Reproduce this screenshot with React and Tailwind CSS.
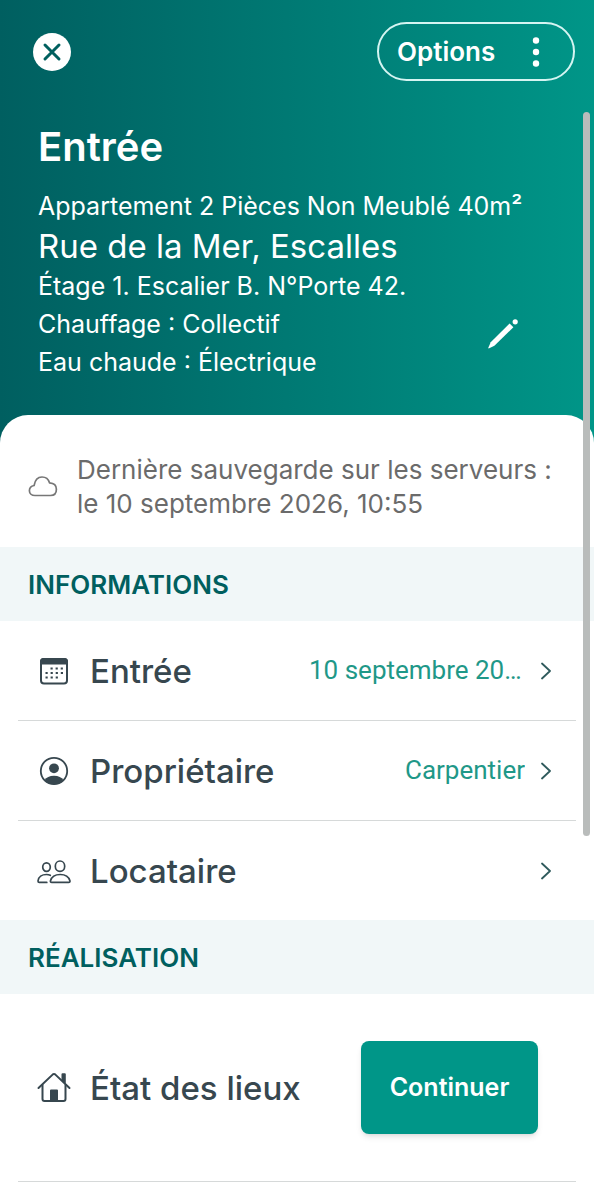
import React from 'react';

const CloseIcon = () => (
  <svg viewBox="0 0 38 38" className="size-[38px]" aria-hidden="true">
    <circle cx="19" cy="19" r="19" fill="#fff" />
    <path d="M12 12l14 14M26 12L12 26" stroke="#00605f" strokeWidth="3" strokeLinecap="round" />
  </svg>
);

const DotsIcon = () => (
  <svg viewBox="0 0 8 30" className="h-[30px] w-2" fill="currentColor" aria-hidden="true">
    <circle cx="4" cy="3.5" r="3.2" />
    <circle cx="4" cy="15" r="3.2" />
    <circle cx="4" cy="26.5" r="3.2" />
  </svg>
);

const PencilIcon = () => (
  <svg viewBox="0 0 30 30" className="size-[30px]" fill="currentColor" aria-hidden="true">
    <path d="M21.600 4.400L25.400 8.200L6.400 26.800L1.200 29.300Q0 29.700.4 28.500L2.700 23.300z" />
    <circle cx="27.200" cy="2.800" r="2.600" />
  </svg>
);

const CloudIcon = () => (
  <svg viewBox="0 0 30 24" className="h-6 w-[30px] shrink-0" fill="none" stroke="#777" strokeWidth="1.7" strokeLinejoin="round" aria-hidden="true">
    <path d="M7 20.5C3.600 20.5 1.4 18.5 1.4 15.7C1.4 12.9 3.2 11.1 6.1 10.5C7 5 9.8 2 14 2C17.9 2 20.5 4.2 21.5 7.8C25.9 8.1 28.4 10.5 28.4 14.2C28.4 18.3 26 20.5 22.5 20.5z" />
  </svg>
);

const CalendarIcon = () => (
  <svg viewBox="0 0 32 32" className="size-8" fill="none" aria-hidden="true">
    <rect x="3" y="4" width="26" height="24.5" rx="3" stroke="currentColor" strokeWidth="2" />
    <path d="M2 9.5V6.5a3.5 3.5 0 013.5-3.5h21a3.5 3.5 0 013.5 3.5v3z" fill="currentColor" />
    <path d="M12.5 13.5h13M7.5 18h18M7.5 22.5h13" stroke="currentColor" strokeWidth="2.2" strokeDasharray="2.2 2.9" />
  </svg>
);

const PersonIcon = () => (
  <svg viewBox="0 0 32 32" className="size-8" aria-hidden="true">
    <circle cx="16" cy="16" r="13.2" fill="none" stroke="currentColor" strokeWidth="1.8" />
    <circle cx="16" cy="13.3" r="4.9" fill="currentColor" />
    <path d="M6.5 25.3C8.2 22.2 11.6 20.7 16 20.7S23.8 22.2 25.5 25.3C23 28.1 19.8 29.3 16 29.3S9 28.1 6.5 25.3z" fill="currentColor" />
  </svg>
);

const PeopleIcon = () => (
  <svg viewBox="0 0 34 32" className="h-8 w-[34px] shrink-0" fill="none" stroke="currentColor" strokeWidth="1.7" strokeLinejoin="round" strokeLinecap="round" aria-hidden="true">
    <ellipse cx="9.5" cy="12.1" rx="3.8" ry="4.3" />
    <ellipse cx="23" cy="11.2" rx="4.7" ry="5.2" />
    <path d="M13.3 20.3C12.1 19.7 10.8 19.5 9.5 19.5C5 19.5 1.4 22 1 26C1 26.9 1.5 27.4 2.3 27.4H9.8" />
    <path d="M14.8 27.4C13.7 27.4 13.2 26.7 13.5 25.7C14.6 21.8 18.5 19.5 23.2 19.5S31.8 21.8 32.900 25.7C33.2 26.7 32.7 27.4 31.6 27.4z" />
  </svg>
);

const HomeIcon = () => (
  <svg viewBox="0 0 34 32" className="h-8 w-[34px] shrink-0" fill="none" stroke="currentColor" strokeWidth="2" strokeLinejoin="round" strokeLinecap="round" aria-hidden="true">
    <path d="M1.5 16L15.6 2.6Q17 1.4 18.4 2.6L32.5 16" />
    <path d="M5.5 13V27Q5.5 29 7.5 29H26.5Q28.5 29 28.5 27V13" />
    <path d="M25.5 2.2H27.8V10.5L25.5 8.300z" fill="currentColor" />
    <path d="M14 18.500H20V29H14z" fill="currentColor" />
  </svg>
);

const ChevronIcon = () => (
  <svg viewBox="0 0 10 18" className="h-[18px] w-[10px] shrink-0" fill="none" stroke="#2f5a5c" strokeWidth="1.8" strokeLinecap="round" strokeLinejoin="round" aria-hidden="true">
    <path d="M1 1.5L9 9L1 16.5" />
  </svg>
);

const SectionTitle = ({ title }) => (
  <h2 className="flex h-[74px] items-center bg-[#f1f7f8] px-7 text-[26px] font-semibold text-[#005f5f]">
    {title}
  </h2>
);

const RowLabel = ({ icon, label }) => (
  <span className="flex shrink-0 items-center gap-5">
    <span className="flex w-8 justify-center">{icon}</span>
    <span className="text-[33px] leading-10 font-medium">{label}</span>
  </span>
);

const rows = [
  { label: 'Entrée', value: '10 septembre 2026', icon: <CalendarIcon /> },
  { label: 'Propriétaire', value: 'Carpentier', icon: <PersonIcon /> },
  { label: 'Locataire', value: '', icon: <PeopleIcon /> }
];

const InfoRow = ({ label, value, icon }) => (
  <li>
    <button type="button" className="flex h-[99px] w-full items-center justify-between pr-[25px] pl-5 text-left">
      <RowLabel icon={icon} label={label} />
      <span className="flex items-center gap-4">
        <span className="max-w-[216px] truncate font-[Roboto,sans-serif] text-[26px] text-[#1f9888]">{value}</span>
        <ChevronIcon />
      </span>
    </button>
  </li>
);

const App = () => {
  return (
    <div className="min-h-screen bg-white font-[Inter,sans-serif] text-[#37474f]">
      <header className="bg-linear-to-r from-[#005f60] to-[#009688] pb-7 text-white">
        <div className="flex items-center justify-between pt-[22px] pr-[19px] pl-[33px]">
          <button type="button" aria-label="Fermer">
            <CloseIcon />
          </button>
          <button type="button" className="flex h-[59px] w-[198px] items-center justify-between rounded-full border-2 border-[#d5f5f2] pr-[33px] pl-[18px] text-[26px] font-semibold">
            Options
            <DotsIcon />
          </button>
        </div>
        <div className="px-[38px] pt-[42px] pb-[34px]">
          <h1 className="text-[40px] leading-[48px] font-semibold">Entrée</h1>
          <div className="flex items-end justify-between pt-4">
            <div className="text-[25px] leading-[38px]">
              <p className="whitespace-nowrap">Appartement 2 Pièces Non Meublé 40m²</p>
              <p className="text-[33px] leading-[42px]">Rue de la Mer, Escalles</p>
              <p>Étage 1. Escalier B. N°Porte 42.</p>
              <p>Chauffage : Collectif</p>
              <p>Eau chaude : Électrique</p>
            </div>
            <button type="button" aria-label="Modifier" className="mr-[38px] mb-8 -ml-16">
              <PencilIcon />
            </button>
          </div>
        </div>
      </header>

      <main className="-mt-7 rounded-t-[28px] bg-white">
        <div className="flex items-center gap-[19px] px-7 pt-[38px] pb-[26px]">
          <CloudIcon />
          <p className="text-[26px] leading-[34px] text-[#6b6b6b]">
            <span className="block whitespace-nowrap">Dernière sauvegarde sur les serveurs :</span>
            <span className="block">le 10 septembre 2026, 10:55</span>
          </p>
        </div>

        <section>
          <SectionTitle title="INFORMATIONS" />
          <ul className="mx-[18px] divide-y divide-[#d6d9d9]">
            {rows.map((row) => (
              <InfoRow key={row.label} {...row} />
            ))}
          </ul>
        </section>

        <section>
          <SectionTitle title="RÉALISATION" />
          <div className="mx-[18px] flex h-[188px] items-center justify-between border-b border-[#d6d9d9] pr-[38px] pl-5">
            <RowLabel icon={<HomeIcon />} label="État des lieux" />
            <button type="button" className="h-[93px] w-[177px] rounded-lg bg-[#009688] text-[25px] font-semibold text-white shadow-md">
              Continuer
            </button>
          </div>
        </section>
      </main>

      <div className="fixed top-28 right-1 h-[724px] w-[7px] rounded-full bg-[#b9bcbb]" />
    </div>
  );
};

export default App;
